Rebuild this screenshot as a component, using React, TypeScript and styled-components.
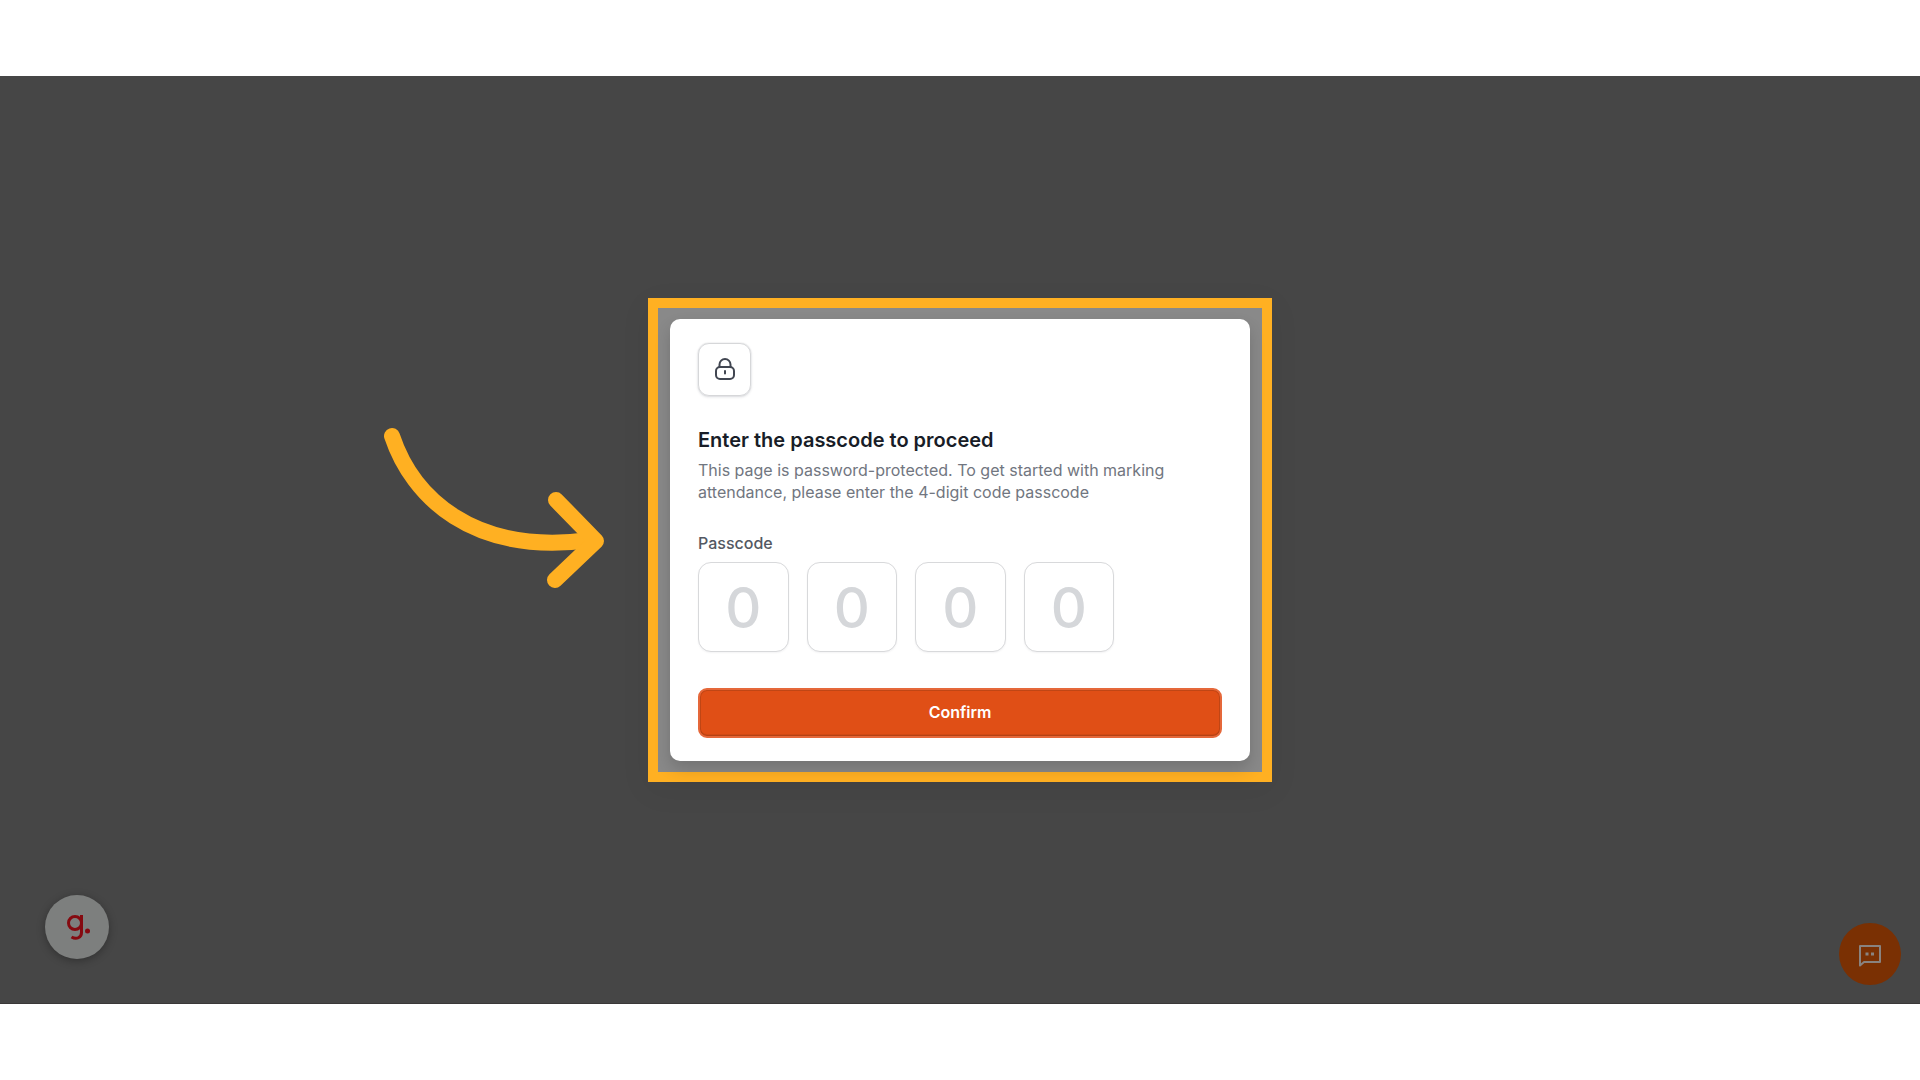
import React, { useState } from "react";
import styled, { createGlobalStyle } from "styled-components";

const GlobalStyle = createGlobalStyle`
  *, *::before, *::after { box-sizing: border-box; }
  body { margin: 0; background: #ffffff; }
`;

const Page = styled.div`
  min-height: 100vh;
  padding: 76px 0;
  display: flex;
  flex-direction: column;
  font-family: Inter, "Liberation Sans", sans-serif;
`;

const Stage = styled.main`
  position: relative;
  flex: 1;
  display: grid;
  place-items: center;
  overflow: hidden;
  background: #464646;
  border-bottom: 1px solid #3a3838;
`;

const Spotlight = styled.div`
  position: relative;
  width: 624px;
  max-width: 100%;
  padding: 11px 12px;
  border: 10px solid #ffb022;
  background: #898989;
  box-shadow: 0 8px 30px rgba(0, 0, 0, 0.06);
`;

const Arrow = styled.svg`
  position: absolute;
  right: calc(100% + 52px);
  top: 116px;
  width: 226px;
  height: 170px;
`;

const Card = styled.form`
  display: flex;
  flex-direction: column;
  padding: 24px 28px 23px;
  border-radius: 10px;
  background: #ffffff;
  box-shadow: 0 8px 16px rgba(0, 0, 0, 0.16);
`;

const IconTile = styled.div`
  display: grid;
  place-items: center;
  width: 53px;
  height: 53px;
  border: 1px solid #d6d7d9;
  border-radius: 11px;
  box-shadow: 0 1px 3px rgba(16, 24, 40, 0.14), 0 0 1px rgba(16, 24, 40, 0.25);
`;

const Title = styled.h1`
  margin: 28px 0 0;
  font-size: 20px;
  font-weight: 600;
  line-height: 32px;
  color: #181d27;
`;

const Description = styled.p`
  margin: 3px 0 0;
  font-size: 16px;
  line-height: 22px;
  color: #717680;
`;

const Fieldset = styled.fieldset`
  margin: 28px 0 0;
  padding: 0;
  border: 0;
`;

const Legend = styled.legend`
  padding: 0;
  font-size: 16px;
  font-weight: 500;
  line-height: 24px;
  color: #535862;
`;

const Digits = styled.div`
  display: grid;
  grid-template-columns: repeat(4, 1fr);
  gap: 18px;
  max-width: 416px;
  padding-top: 7px;
`;

const Digit = styled.input`
  width: 100%;
  height: 90px;
  padding: 2px 0 0;
  border: 1px solid #d8d9db;
  border-radius: 13px;
  background: #ffffff;
  box-shadow: 0 1px 2px rgba(16, 24, 40, 0.05);
  font: 500 56px Inter, "Liberation Sans", sans-serif;
  text-align: center;
  color: #181d27;
  &::placeholder { color: #d5d7da; opacity: 1; }
`;

const Confirm = styled.button`
  height: 50px;
  margin-top: 36px;
  padding: 0 16px 2px;
  border: 2px solid #e5683a;
  border-radius: 9px;
  background: #e04f16;
  box-shadow: inset 0 0 0 1px rgba(120, 50, 20, 0.3), inset 0 -2px 0 rgba(120, 50, 20, 0.15);
  font: 600 16px Inter, "Liberation Sans", sans-serif;
  color: #ffffff;
`;

const FloatingButton = styled.button<{ $side: "left" | "right" }>`
  position: absolute;
  ${(p) => (p.$side === "left" ? "left: 45px; bottom: 44px;" : "right: 19px; bottom: 18px;")}
  display: grid;
  place-items: center;
  width: ${(p) => (p.$side === "left" ? 64 : 62)}px;
  height: ${(p) => (p.$side === "left" ? 64 : 62)}px;
  padding: 0;
  border: 0;
  border-radius: 50%;
  background: ${(p) => (p.$side === "left" ? "#7d7f7e" : "#7a3003")};
  box-shadow: ${(p) => (p.$side === "left" ? "0 2px 8px rgba(0, 0, 0, 0.3)" : "none")};
`;

export default function App() {
  const [code, setCode] = useState(["", "", "", ""]);
  const update = (index: number, value: string) =>
    setCode(code.map((digit, i) => (i === index ? value : digit)));

  return (
    <Page>
      <GlobalStyle />
      <Stage>
        <Spotlight>
          <Arrow viewBox="0 0 226 170" fill="none" stroke="#ffb022" strokeWidth="16" strokeLinecap="round" strokeLinejoin="round" aria-hidden="true">
            <path d="M12 12C32 72 92 132 210 116" />
            <path d="M176 76L216 117L175 156" />
          </Arrow>
          <Card onSubmit={(event) => event.preventDefault()}>
            <IconTile>
              <svg width="24" height="24" viewBox="0 0 24 24" fill="none" stroke="#414651" strokeWidth="2" strokeLinecap="round" strokeLinejoin="round" aria-hidden="true">
                <path d="M6.500 10V7.500a5.500 5.500 0 0 1 11 0V10M12 14v2.500" />
                <rect x="3" y="10" width="18" height="12" rx="4" />
              </svg>
            </IconTile>
            <Title>Enter the passcode to proceed</Title>
            <Description>
              This page is password-protected. To get started with marking attendance, please enter the 4-digit code passcode
            </Description>
            <Fieldset>
              <Legend>Passcode</Legend>
              <Digits>
                {code.map((digit, i) => (
                  <Digit
                    key={i}
                    value={digit}
                    placeholder="0"
                    inputMode="numeric"
                    maxLength={1}
                    aria-label={`Digit ${i + 1}`}
                    onChange={(event) => update(i, event.target.value)}
                  />
                ))}
              </Digits>
            </Fieldset>
            <Confirm type="submit">Confirm</Confirm>
          </Card>
        </Spotlight>
        <FloatingButton type="button" $side="left" aria-label="Open guide">
          <svg width="26" height="28" viewBox="-2 -1 26 28" fill="none" stroke="#850a10" strokeWidth="3" aria-hidden="true">
            <circle cx="9" cy="9" r="6.500" />
            <path d="M15.500 1v17.500c0 5-5 7.500-10 4.500" />
            <circle cx="21.500" cy="17" r="2.500" fill="#850a10" stroke="none" />
          </svg>
        </FloatingButton>
        <FloatingButton type="button" $side="right" aria-label="Open chat">
          <svg width="26" height="26" viewBox="0 0 26 26" fill="none" stroke="#898380" strokeWidth="2" strokeLinejoin="round" aria-hidden="true">
            <path d="M3 5h20v16H7l-4 3.500z" />
            <path d="M8.500 13h3M14 13h3" strokeWidth="3" />
          </svg>
        </FloatingButton>
      </Stage>
    </Page>
  );
}
